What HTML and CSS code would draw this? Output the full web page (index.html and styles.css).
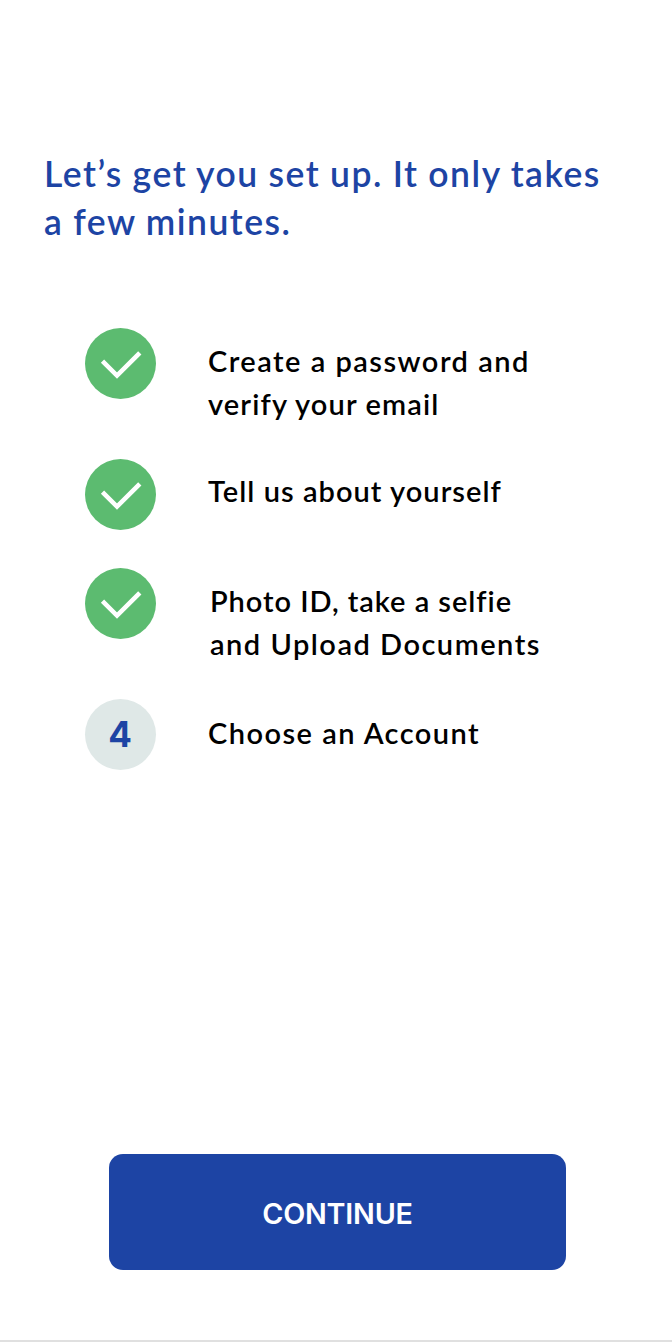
FILE: index.html
```html
<!DOCTYPE html>
<html lang="en">
<head>
<meta charset="utf-8">
<title>Set up your account</title>
<link rel="stylesheet" href="styles.css">
</head>
<body>
<main class="screen">
  <h1 class="title">Let’s get you set up. It only takes<br>a few minutes.</h1>
  <ol class="steps">
    <li class="step">
      <svg class="badge" viewBox="0 0 71 71"><circle cx="35.5" cy="35.5" r="35.5"/><path d="M17.5 33.2 32 47.6 54.8 24.8"/></svg>
      <p class="label"><span class="l1">Create a password and</span><br><span class="l2">verify your email</span></p>
    </li>
    <li class="step">
      <svg class="badge" viewBox="0 0 71 71"><circle cx="35.5" cy="35.5" r="35.5"/><path d="M17.5 33.2 32 47.6 54.8 24.8"/></svg>
      <p class="label label-up"><span class="l3">Tell us about yourself</span></p>
    </li>
    <li class="step step-inset">
      <svg class="badge" viewBox="0 0 71 71"><circle cx="35.5" cy="35.5" r="35.5"/><path d="M17.5 33.2 32 47.6 54.8 24.8"/></svg>
      <p class="label"><span class="l4">Photo ID, take a selfie</span><br><span class="l5">and Upload Documents</span></p>
    </li>
    <li class="step">
      <span class="badge number">4</span>
      <p class="label label-down"><span class="l6">Choose an Account</span></p>
    </li>
  </ol>
  <button class="continue" type="button">CONTINUE</button>
</main>
</body>
</html>
```
FILE: styles.css
```css
* { box-sizing: border-box; }
body { margin: 0; background: #fff; }
.screen {
  display: flex;
  flex-direction: column;
  height: 1342px;
  padding: 150px 0 70px;
  border-bottom: 2px solid #e0e0e0;
  font-family: Lato, "Liberation Sans", sans-serif;
}
.title {
  margin: 0;
  padding-left: 44px;
  color: #1d44a4;
  font-size: 35.5px;
  font-weight: 600;
  line-height: 48px;
  letter-spacing: 1.5px;
  word-spacing: -0.5px;
  white-space: nowrap;
}
.steps {
  display: grid;
  grid-template-rows: 130.4px 109px 131.3px 71px;
  margin: 82.4px 0 0;
  padding: 0 0 0 85px;
  list-style: none;
}
.step { display: flex; align-items: flex-start; gap: 52px; }
.step-inset { gap: 54px; }
.badge { flex: none; width: 71px; height: 71px; }
.badge circle { fill: #5cbb70; }
.badge path { fill: none; stroke: #fff; stroke-width: 4.6; }
.number {
  padding-right: 1px;
  border-radius: 50%;
  background: #dfe8e7;
  color: #1d44a4;
  font: 650 35px/71px Inter, sans-serif;
  text-align: center;
}
.label {
  margin: 0;
  padding-top: 11px;
  color: #000;
  font-size: 29px;
  font-weight: 600;
  line-height: 43px;
  white-space: nowrap;
}
.label-up { padding-top: 10px; }
.label-down { padding-top: 12px; }
.l1 { letter-spacing: 1.48px; }
.l2 { letter-spacing: 1.12px; }
.l3 { letter-spacing: 1.04px; }
.l4 { letter-spacing: 0.96px; }
.l5 { letter-spacing: 1.5px; }
.l6 { letter-spacing: 1.46px; }
.continue {
  width: 457px;
  height: 116px;
  margin: auto 0 0 109px;
  padding: 4px 0 0;
  border: 0;
  border-radius: 14px;
  background: #1d44a4;
  color: #fff;
  font: 600 28.7px/40px Inter, sans-serif;
  letter-spacing: -0.2px;
}
```
